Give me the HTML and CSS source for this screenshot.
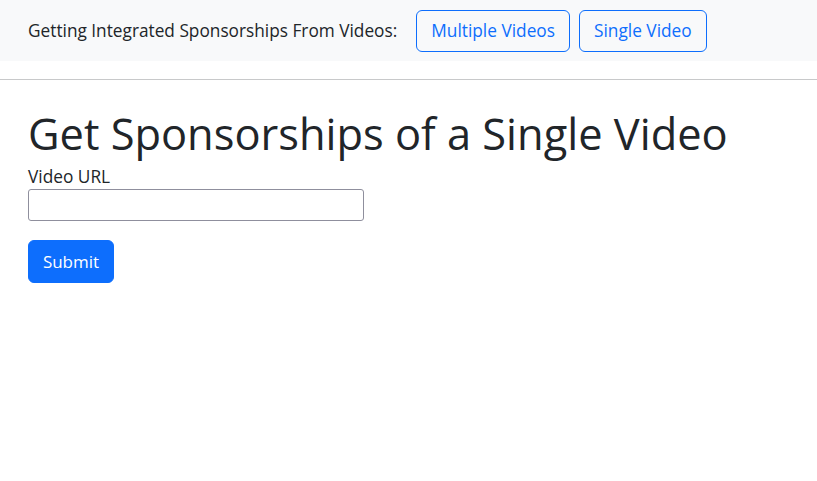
FILE: index.html
```html
<!DOCTYPE html>
<html lang="en">
<head>
<meta charset="utf-8">
<title>Get Sponsorships</title>
<link rel="stylesheet" href="styles.css">
</head>
<body>
<header class="topbar">
  <span class="topbar-label">Getting Integrated Sponsorships From Videos:</span>
  <div class="topbar-actions">
    <button class="btn-outline" type="button">Multiple Videos</button>
    <button class="btn-outline" type="button">Single Video</button>
  </div>
</header>
<hr class="divider">
<main class="content">
  <h1 class="title">Get Sponsorships of a Single Video</h1>
  <form class="form">
    <label class="label" for="url">Video URL</label>
    <input class="input" id="url" type="text">
    <button class="btn-primary" type="submit">Submit</button>
  </form>
</main>
</body>
</html>
```
FILE: styles.css
```css
* { box-sizing: border-box; }
body {
  margin: 0;
  font-family: "Open Sans", "Noto Sans", sans-serif;
  color: #212529;
  background: #fff;
}
.topbar {
  display: flex;
  align-items: center;
  gap: 19px;
  height: 61px;
  padding: 0 28px;
  background: #f8f9fa;
}
.topbar-label {
  font-size: 17.25px;
  color: #212529;
}
.topbar-actions {
  display: flex;
  gap: 9px;
}
.btn-outline {
  font-family: inherit;
  font-size: 17.3px;
  height: 42px;
  padding: 0 14px;
  color: #0d6efd;
  background: transparent;
  border: 1px solid #0d6efd;
  border-radius: 6px;
}
.divider {
  margin: 18px 0 0;
  border: 0;
  border-top: 1px solid #c8c9ca;
}
.content {
  padding: 0 28px;
}
.title {
  margin: 28px 0 0;
  font-size: 43.4px;
  font-weight: 400;
  line-height: 1.2;
}
.form {
  display: flex;
  flex-direction: column;
  align-items: flex-start;
}
.label {
  font-size: 17.3px;
  line-height: 1.3;
  margin-top: 6px;
}
.input {
  width: 336px;
  height: 32px;
  border: 1px solid #8f8f9d;
  border-radius: 3px;
  margin-top: 0;
}
.btn-primary {
  margin-top: 19px;
  font-family: inherit;
  font-size: 17px;
  width: 86px;
  height: 43px;
  color: #fff;
  background: #0d6efd;
  border: 1px solid #0d6efd;
  border-radius: 6px;
}
```
